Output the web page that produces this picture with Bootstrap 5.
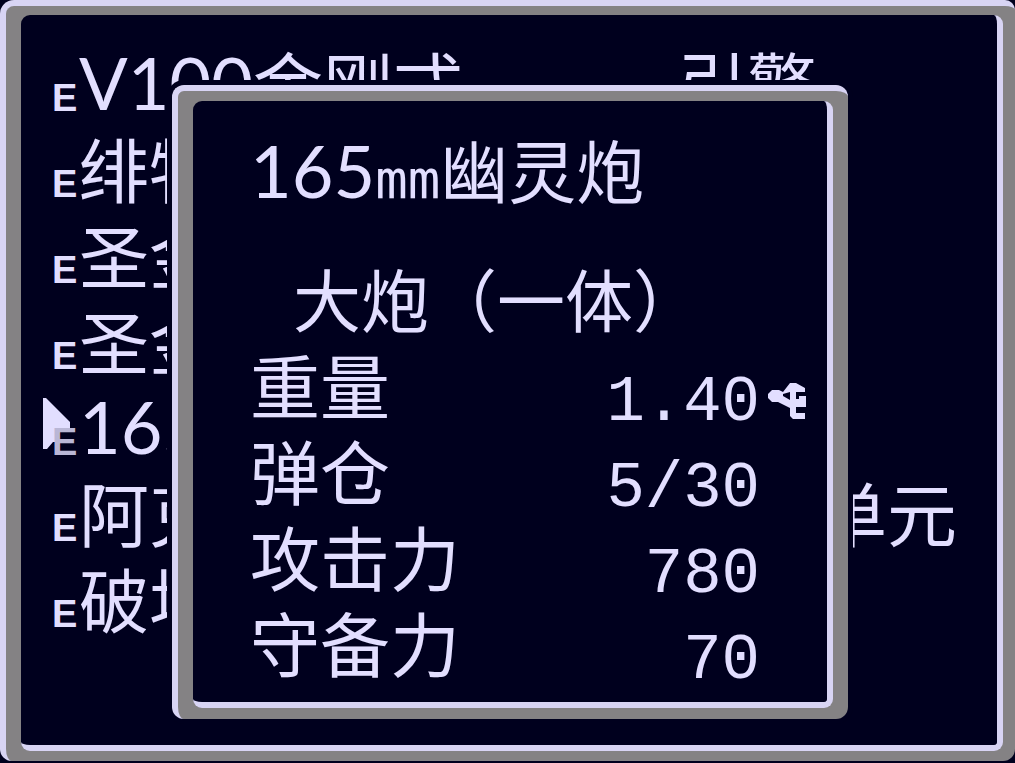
<!DOCTYPE html>
<html lang="zh-CN">
<head>
<meta charset="utf-8">
<meta name="viewport" content="width=device-width, initial-scale=1">
<title>165mm幽灵炮</title>
<link href="https://cdn.jsdelivr.net/npm/bootstrap@5.3.0/dist/css/bootstrap.min.css" rel="stylesheet">
<style>
:root{--ink:#e2deff;--edge:#d8d4f4;--metal:#848284;--night:#00001e}
body{background:var(--night);color:var(--ink);font-family:"Noto Sans CJK SC",sans-serif;font-size:70px;line-height:86px}
.frame{background:var(--metal);border-style:solid;border-color:var(--edge);border-width:6px 0 0 6px;border-radius:14px 10px 12px 12px;padding:9px 12px 10px 15px}
.pane{background:var(--night);border-style:solid;border-color:var(--edge);border-width:0 6px 6px 0;border-radius:9px}
.screen{padding-bottom:2px}
.gear{padding:24px 40px 0 31px}
.gear li{height:86px;white-space:nowrap}
.equip{font:700 38px/38px "Liberation Sans",sans-serif;width:27px;padding-top:31px}
.latin{font-family:Lato,sans-serif;font-size:72px}
.milli{font-family:"DejaVu Sans Mono",monospace;font-size:54px}
.engine{margin-right:140px}
.cursor{left:-10px;top:15px;width:29px;height:52px}
.shade{color:#b9b6d6}
.dialog{left:172px;right:167px;top:85px;border-radius:12px;box-shadow:0 0 0 5px var(--night);padding:10px 15px 11px 15px}
.dialog .pane{padding:25px 20px 17px 57px}
.dialog h1{font-size:68px;line-height:86px;height:86px;font-weight:400;margin:0 0 43px;white-space:nowrap}
.kind{font-size:68px;height:86px;margin:0 0 0 43px;white-space:nowrap}
.stats th,.stats td{height:86px;padding:0;font-weight:400;white-space:nowrap}
.stats .num{font-family:"Liberation Mono",monospace;font-size:64px;line-height:46px;text-align:right;padding-top:38px}
.stats .unit{width:47px;padding-top:34px;line-height:52px}
.unit svg{width:40px;height:38px;display:block;margin-left:auto}
</style>
</head>
<body>
<main class="screen position-relative min-vh-100 d-flex flex-column">
  <section class="frame flex-fill d-flex">
    <div class="pane flex-fill overflow-hidden">
      <ul class="gear list-unstyled m-0">
        <li class="d-flex align-items-center"><span class="equip">E</span><span class="latin">V100</span><span>金刚式</span><span class="engine ms-auto">引擎</span></li>
        <li class="d-flex align-items-center"><span class="equip">E</span><span>绯牡</span></li>
        <li class="d-flex align-items-center"><span class="equip">E</span><span>圣金</span></li>
        <li class="d-flex align-items-center"><span class="equip">E</span><span>圣金</span></li>
        <li class="d-flex align-items-center position-relative" aria-current="true">
          <svg class="cursor position-absolute" viewBox="0 0 29 52" aria-hidden="true"><path d="M1 0h3l24 24v7H16v13h-5l-6 7H1z" fill="#e2deff"/></svg>
          <span class="equip shade position-relative">E</span><span class="latin">165</span></li>
        <li class="d-flex align-items-center"><span class="equip">E</span><span>阿克</span><span class="ms-auto">单元</span></li>
        <li class="d-flex align-items-center"><span class="equip">E</span><span>破坏</span></li>
      </ul>
    </div>
  </section>
  <section class="dialog frame position-absolute" role="dialog" aria-labelledby="item">
    <div class="pane">
      <h1 id="item" class="d-flex align-items-baseline"><span class="latin">165</span><span class="milli">mm</span><span>幽灵炮</span></h1>
      <p class="kind">大炮（一体）</p>
      <table class="stats w-100">
        <tr><th scope="row">重量</th><td class="num">1.40</td><td class="unit"><svg viewBox="0 0 40 38" role="img" aria-label="吨"><path d="M1 12L5 8H12L16 10L23 1H29L38 6V10H29V17H32V14H39V25H29V31H38V37H26L23 34V26L11 20H5L1 16zM16 12V14L23 18V10z" fill="#e2deff" fill-rule="evenodd"/></svg></td></tr>
        <tr><th scope="row">弹仓</th><td class="num">5/30</td><td></td></tr>
        <tr><th scope="row">攻击力</th><td class="num">780</td><td></td></tr>
        <tr><th scope="row">守备力</th><td class="num">70</td><td></td></tr>
      </table>
    </div>
  </section>
</main>
<script src="https://cdn.jsdelivr.net/npm/bootstrap@5.3.0/dist/js/bootstrap.bundle.min.js"></script>
</body>
</html>
